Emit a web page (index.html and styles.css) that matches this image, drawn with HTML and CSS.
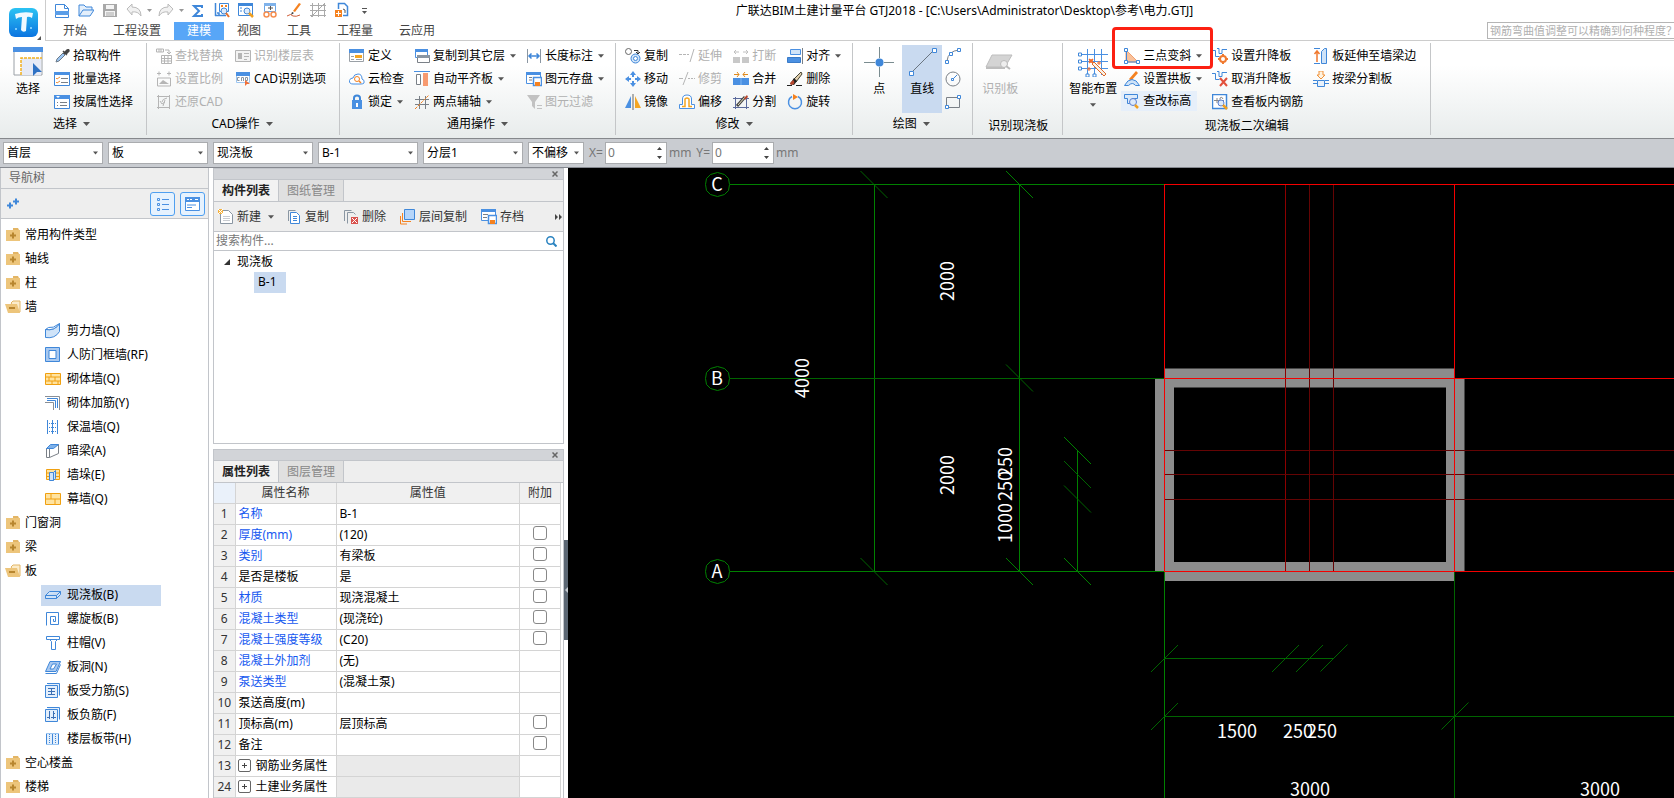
FILE: index.html
```html
<!DOCTYPE html>
<html lang="zh-CN">
<head>
<meta charset="utf-8">
<title>广联达BIM土建计量平台 GTJ2018</title>
<link rel="stylesheet" href="styles.css">
</head>
<body>
<svg class="defs" width="0" height="0" aria-hidden="true">
  <symbol id="down" viewBox="0 0 7 4"><path d="M0 0h7L3.500 4z" fill="#555"/></symbol>
  <symbol id="close" viewBox="0 0 6 6"><path d="M.5.5l5 5M5.500.5l-5 5" stroke="#666" stroke-width="1.500"/></symbol>
  <symbol id="folder" viewBox="0 0 16 16"><path d="M8 1h5l1 2H8z" fill="#e3b565"/><path d="M1 3h14v11H1z" fill="#edc57b"/><path d="M5 8.500h6M8 5.500v6" stroke="#b8862f" stroke-width="2"/></symbol>
  <symbol id="folder-open" viewBox="0 0 16 16"><path d="M6 4l2-2h7v11h-2z" fill="#fbeccb" stroke="#e3b565"/><path d="M0 5h12l3 9H3z" fill="#edc57b"/><path d="M4 9h6" stroke="#b8862f" stroke-width="2"/></symbol>
</svg>

<header class="top">
  <button class="logo" aria-label="应用菜单">
    <svg width="33" height="33" viewBox="0 0 33 33"><defs><linearGradient id="lg" x2="0" y2="1"><stop stop-color="#2bc3f3"/><stop offset="1" stop-color="#0b74e0"/></linearGradient></defs><rect width="29" height="29" rx="6" fill="url(#lg)"/><path d="M6 6q9-3 18-1l-1 5q-3-2-5-1l-1 14q-3 2-5-1l1-13q-4 0-6 2z" fill="#eef9ff"/><circle cx="7" cy="21" r="1" fill="#9fe0ff"/><circle cx="22" cy="20" r="1" fill="#9fe0ff"/><path d="M32 28v4h-4z" fill="#555"/></svg>
  </button>
  <div class="top-main">
    <div class="title-row">
      <div class="quick">
        <button aria-label="新建"><svg viewBox="0 0 16 16"><path d="M1.500 2.500h9l4 4v9h-13zM10.500 2.500v4h4" fill="#fff" stroke="#3f87d9"/><path d="M1 9h14v4H1z" fill="#5b9ee8"/></svg></button>
        <button aria-label="打开"><svg viewBox="0 0 16 16"><path d="M1 14V3h5l2 2h6v3M1 14l4-6h11l-4 6z" fill="#e4effb" stroke="#3f87d9"/></svg></button>
        <button aria-label="保存"><svg viewBox="0 0 16 16"><path d="M1 2h14v13H1z" fill="#a8a8a8"/><path d="M4 3h8v4H4zM3 9h10v5H3z" fill="#f4f4f4"/><path d="M4 11h8M4 13h8" stroke="#a8a8a8"/></svg></button>
        <button class="with-arrow" aria-label="撤销"><svg viewBox="0 0 16 16"><path d="M1 7l5-5v3q9 0 9 9q-3-5-9-4v3z" fill="#f1f1f1" stroke="#bbb"/></svg><svg class="arrow pale"><use href="#down"/></svg></button>
        <button class="with-arrow" aria-label="重做"><svg viewBox="0 0 16 16"><path d="M15 7l-5-5v3Q1 5 1 14q3-5 9-4v3z" fill="#f1f1f1" stroke="#bbb"/></svg><svg class="arrow pale"><use href="#down"/></svg></button>
        <button aria-label="汇总计算"><svg viewBox="0 0 16 16"><path d="M12 6V4H4l5 5-5 5h8v-2" fill="none" stroke="#3f87d9" stroke-width="2"/></svg></button>
        <button aria-label="查看"><svg viewBox="0 0 16 16"><path d="M1.500 1v13M1 13.500h11M3 11h2v2" fill="none" stroke="#3f87d9" stroke-width="1.500"/><path d="M5.500 1.500h9v8h-9z" fill="#fff" stroke="#3f87d9"/><path d="M7 3h2v2H7zM11 3h2v2h-2z" fill="#f58220"/><circle cx="10" cy="9" r="3" fill="#dceafa" stroke="#3f87d9"/><path d="M12 11l3 4" stroke="#e8702a" stroke-width="2"/></svg></button>
        <button aria-label="查找"><svg viewBox="0 0 16 16"><path d="M.5 1.500h14v12H.5z" fill="#fff" stroke="#3f87d9"/><path d="M0 1h15v3H0z" fill="#3f87d9"/><path d="M2 6h2M2 9h2" stroke="#3f87d9"/><circle cx="9" cy="9" r="3" fill="#dceafa" stroke="#3f87d9"/><path d="M11 11l4 4" stroke="#f0a020" stroke-width="2.500"/></svg></button>
        <button aria-label="检查"><svg viewBox="0 0 16 16"><path d="M2.500 1.500h11v8h-11z" fill="#fff" stroke="#6aa5e5"/><path d="M2 1h12v3H2z" fill="#7fb2ea"/><path d="M6 6h5M8.500 4v4" stroke="#555"/><circle cx="4.500" cy="12.500" r="2.500" fill="none" stroke="#f58e50" stroke-width="1.500"/><circle cx="11.500" cy="12.500" r="2.500" fill="none" stroke="#f58e50" stroke-width="1.500"/></svg></button>
        <button aria-label="画笔"><svg viewBox="0 0 16 16"><path d="M13 1l2 1-6 8-2-1z" fill="#f58220"/><path d="M6 10l2 1-3 2z" fill="#333"/><path d="M1 14q4-3 6 0q3 1 7-1" stroke="#d0603a" fill="none"/></svg></button>
        <button aria-label="轴网"><svg viewBox="0 0 16 16"><path d="M2.500 1v14M8.500 1v14M14.500 1v14M0 3.500h16M0 8.500h16M0 13.500h16M1 15L15 1" stroke="#aaa" fill="none"/></svg></button>
        <button aria-label="导入"><svg viewBox="0 0 16 16"><path d="M4.500 7V1.500h6l3 3v9H9" fill="#fff" stroke="#3f87d9" stroke-width="1.500"/><path d="M1 8h7v7H1z" fill="#f58220"/><path d="M2 11.500h5M4.500 9v5" stroke="#fff"/><path d="M9 7q3 0 2 4" stroke="#555" fill="none"/></svg></button>
        <button aria-label="自定义"><svg viewBox="0 0 16 16"><path d="M4 6.500h5" stroke="#555"/><path d="M4 9h5L6.500 12z" fill="#555"/></svg></button>
      </div>
      <h1>广联达BIM土建计量平台 GTJ2018 - [C:\Users\Administrator\Desktop\参考\电力.GTJ]</h1>
    </div>
    <div class="menu-row">
      <nav class="menu">
        <button>开始</button><button>工程设置</button><button class="active">建模</button><button>视图</button><button>工具</button><button>工程量</button><button>云应用</button>
      </nav>
      <input class="help" aria-label="帮助搜索" placeholder="钢筋弯曲值调整可以精确到何种程度？">
    </div>
  </div>
</header>

<section class="ribbon">
  <div class="group first">
    <div class="tools">
      <button class="big"><svg viewBox="0 0 30 30"><path d="M1 1h28v27H1z" fill="#fff" stroke="#9aa0a6"/><path d="M0 0h30v5H0z" fill="#4a90e2"/><path d="M8 11h20v17H8z" fill="#e6eaf6"/><path d="M8 28V11h21" fill="none" stroke="#f2b01e" stroke-width="1.500" stroke-dasharray="3 1"/><path d="M20 16l9 9h-5l-4 4z" fill="#2f72c4"/></svg>选择</button>
      <div class="col">
        <button class="tool"><svg viewBox="0 0 16 16"><path d="M2 14l1-3 6-6 2 2-6 6z" fill="#9cc6f2" stroke="#6c7a89"/><path d="M9 3l4 4M10 5l3-3q2-1 2 1l-3 3z" fill="#444" stroke="#444" stroke-width="1.500"/></svg>拾取构件</button>
        <button class="tool"><svg viewBox="0 0 16 16"><path d="M.5 1.500h15v13H.5z" fill="#fff" stroke="#3f87d9"/><path d="M0 1h16v3H0z" fill="#4a90e2"/><path d="M2 7l1 1 3-2M2 11l1 1 3-2" fill="none" stroke="#f0923a"/><path d="M7 7.500h7M7 11.500h7" stroke="#7a8087"/></svg>批量选择</button>
        <button class="tool"><svg viewBox="0 0 16 16"><path d="M.5 1.500h15v13H.5z" fill="#fff" stroke="#3f87d9"/><path d="M0 1h16v4H0z" fill="#4a90e2"/><path d="M2 2h4L4 4z" fill="#fff"/><path d="M3 8.500h1M6 8.500h7M3 11.500h1M6 11.500h7" stroke="#7a8087"/></svg>按属性选择</button>
      </div>
    </div>
    <button class="group-name">选择<svg class="arrow"><use href="#down"/></svg></button>
  </div>

  <div class="group">
    <div class="tools gap-12">
      <div class="col">
        <button class="tool" disabled><svg viewBox="0 0 16 16"><path d="M.5 1v3h7V1zM3 1v3M5 1v3M9 2h4v4M11 4l2 2 2-2M5.500 7.500h10v8h-10zM5 10.500h10M5 13h10M8.500 7v8M12 7v8" fill="none" stroke="#b5b5b5"/></svg>查找替换</button>
        <button class="tool" disabled><svg viewBox="0 0 16 16"><path d="M1 2.500h4M3 .5v4M11 2.500h4M13 .5v4M1.500 7v8h13V7z" fill="none" stroke="#b5b5b5"/><path d="M3 13l4-4 3 2 3 2z" fill="#b5b5b5"/></svg>设置比例</button>
        <button class="tool" disabled><svg viewBox="0 0 16 16"><path d="M1 2.500h13M1 13.500h13M2.500 1v14M13.500 1v14M6 8q0-3 5-4M4 7l2 3 3-2M9 6l-2 6" fill="none" stroke="#b5b5b5"/></svg>还原CAD</button>
      </div>
      <div class="col">
        <button class="tool" disabled><svg viewBox="0 0 16 16"><path d="M.5 2.500h15v11H.5z" fill="#f3f3f3" stroke="#b5b5b5"/><path d="M3 5h4v6H3z" fill="#b5b5b5"/><path d="M9 5.500h5M9 8.500h5M9 11.500h3" stroke="#b5b5b5"/></svg>识别楼层表</button>
        <button class="tool"><svg viewBox="0 0 16 16"><path d="M1.500 1.500h13v10h-13z" fill="#fff" stroke="#9cc6f2"/><path d="M1 1h14v4H1z" fill="#4a90e2"/><path d="M4.500 6.500h-2v3h2M6.500 10V6.500h2V10M10.500 6.500v3h2v-3z" stroke="#8a96a2" fill="none"/><path d="M10 9l5 4h-3l-2 2z" fill="#f0703a"/></svg>CAD识别选项</button>
      </div>
    </div>
    <button class="group-name">CAD操作<svg class="arrow"><use href="#down"/></svg></button>
  </div>

  <div class="group tight">
    <div class="tools gap-10">
      <div class="col">
        <button class="tool"><svg viewBox="0 0 16 16"><path d="M.5 1.500h14v12H.5z" fill="#fff" stroke="#9aa0a6"/><path d="M0 1h15v4H0z" fill="#4a90e2"/><path d="M2 8.500h3M2 11.500h3M7 11.500h6" stroke="#9aa0a6"/><path d="M6 7h7v3H6z" fill="#f5a623"/></svg>定义</button>
        <button class="tool"><svg viewBox="0 0 16 16"><path d="M4 13Q0 13 .5 9.500Q1 7 4 7Q5 3 9 3q4 0 4 5q3 1 2 4-1 1-3 1z" fill="#fff" stroke="#4a90e2"/><circle cx="8" cy="8" r="2.500" fill="none" stroke="#f58220"/><path d="M10 10l2 2" stroke="#f58220" stroke-width="1.500"/></svg>云检查</button>
        <button class="tool"><svg viewBox="0 0 16 16"><path d="M5 7V4q0-2.500 3-2.500T11 4v3" fill="none" stroke="#3f87d9" stroke-width="2"/><path d="M3 6h10v9H3z" fill="#4a90e2"/><path d="M8 9v4" stroke="#fff" stroke-width="2"/></svg>锁定<svg class="arrow"><use href="#down"/></svg></button>
      </div>
      <div class="col">
        <button class="tool"><svg viewBox="0 0 16 16"><path d="M1.500 1.500h12v8h-12z" fill="#fff" stroke="#4a90e2"/><path d="M1 1h13v3H1z" fill="#4a90e2"/><path d="M3.500 7.500h12v7h-12z" fill="#fff" stroke="#7a8087"/><path d="M3 7h13v3H3z" fill="#8a96a2"/></svg>复制到其它层<svg class="arrow"><use href="#down"/></svg></button>
        <button class="tool"><svg viewBox="0 0 16 16"><path d="M0 .5h16" stroke="#4a90e2"/><path d="M2.500 3.500h4v10h-4z" fill="#fff" stroke="#7a8087"/><path d="M9 2h5v13H9z" fill="#f79a70"/></svg>自动平齐板<svg class="arrow"><use href="#down"/></svg></button>
        <button class="tool"><svg viewBox="0 0 16 16"><path d="M5.500 2v13M11.500 2v13M1 5.500h14M1 10.500h14" stroke="#7a8087"/><path d="M1 15L15 1" stroke="#f58220" stroke-dasharray="3 1"/></svg>两点辅轴<svg class="arrow"><use href="#down"/></svg></button>
      </div>
      <div class="col">
        <button class="tool"><svg viewBox="0 0 16 16"><path d="M1.500 1v14M14.500 1v14" stroke="#8a96a2"/><path d="M3 8h10M5.500 5.500L3 8l2.500 2.500M10.500 5.500L13 8l-2.500 2.500" stroke="#3f87d9" fill="none" stroke-width="1.500"/></svg>长度标注<svg class="arrow"><use href="#down"/></svg></button>
        <button class="tool"><svg viewBox="0 0 16 16"><path d="M.5 1.500h14v11H.5z" fill="#fff" stroke="#4a90e2"/><path d="M0 1h15v3H0z" fill="#4a90e2"/><path d="M3 6.500h3M3 9h3" stroke="#7a8087"/><path d="M7.500 6.500h8v8h-8z" fill="#fff" stroke="#4a90e2" stroke-width="1.500"/><path d="M9 11h5v4H9z" fill="#f58220"/></svg>图元存盘<svg class="arrow"><use href="#down"/></svg></button>
        <button class="tool" disabled><svg viewBox="0 0 16 16"><path d="M1 1h13L9 8v7l-3-3V8z" fill="#c2c2c2"/><path d="M11 11.500h5M11 14.500h5" stroke="#c2c2c2"/></svg>图元过滤</button>
      </div>
    </div>
    <button class="group-name">通用操作<svg class="arrow"><use href="#down"/></svg></button>
  </div>

  <div class="group tight">
    <div class="tools gap-11">
      <div class="col">
        <button class="tool"><svg viewBox="0 0 16 16"><circle cx="3.500" cy="3.500" r="3" fill="#fff" stroke="#666"/><circle cx="10.500" cy="10.500" r="4.500" fill="#cfe3f8" stroke="#3f87d9"/><circle cx="10.500" cy="10.500" r="2" fill="#fff" stroke="#3f87d9"/><path d="M9 2.500h4v3M11 4l2 2 2-2" stroke="#333" fill="none"/></svg>复制</button>
        <button class="tool"><svg viewBox="0 0 16 16"><path d="M8 0l3 4H5zM8 16l3-4H5zM0 8l4-3v6zM16 8l-4-3v6z" fill="#4a90e2"/><path d="M8 3v3M8 10v3M3 8h3M10 8h3" stroke="#4a90e2" stroke-width="2"/></svg>移动</button>
        <button class="tool"><svg viewBox="0 0 16 16"><path d="M6 2v12H0z" fill="#4a90e2"/><path d="M10 2v12h6z" fill="#f5a623"/><path d="M8 0v16" stroke="#666"/></svg>镜像</button>
      </div>
      <div class="col">
        <button class="tool" disabled><svg viewBox="0 0 16 16"><path d="M0 6.500h10" stroke="#b5b5b5" stroke-dasharray="3 1"/><path d="M11 14l4-13" stroke="#b5b5b5"/></svg>延伸</button>
        <button class="tool" disabled><svg viewBox="0 0 16 16"><path d="M0 7.500h4M4 14L9 1" stroke="#b5b5b5" fill="none"/><path d="M9 7.500h7" stroke="#b5b5b5" stroke-dasharray="2 1"/></svg>修剪</button>
        <button class="tool"><svg viewBox="0 0 16 16"><path d="M.5 14.500v-4h3V5q0-4 4.500-4t4.500 4v5.500h3v4z" fill="#fff" stroke="#4a90e2"/><path d="M3 12.500h3V5q2-2 4 0v7.500h3" fill="none" stroke="#f5a623" stroke-width="1.500"/></svg>偏移</button>
      </div>
      <div class="col">
        <button class="tool" disabled><svg viewBox="0 0 16 16"><path d="M0 9h7v6H0zM9 9h7v6H9z" fill="#c8c8c8"/><path d="M1 4h5M3 2L1 4l2 2M10 4h5M13 2l2 2-2 2" stroke="#c0c0c0" fill="none"/></svg>打断</button>
        <button class="tool"><svg viewBox="0 0 16 16"><path d="M0 7h16v7H0z" fill="#4a90e2"/><path d="M8 7v7" stroke="#7fb6f2"/><path d="M1 3.500h5M4 1l2 2.500L4 6M15 3.500h-5M12 1l-2 2.500L12 6" stroke="#e08a1c" fill="none"/></svg>合并</button>
        <button class="tool"><svg viewBox="0 0 16 16"><path d="M0 4.500h16M0 13.500h16M2.500 3v12M13.500 3v12" stroke="#5b6a9c"/><path d="M4 12L12 3" stroke="#444" stroke-width="3"/><path d="M5 11l7-8" stroke="#e8e2c0"/><path d="M11 4l3-3 1 2-3 3z" fill="#b5452c"/></svg>分割</button>
      </div>
      <div class="col">
        <button class="tool"><svg viewBox="0 0 16 16"><path d="M3.500 1.500h10v5h-10z" fill="#cfe3f8" stroke="#4a90e2"/><path d="M.5 9.500h13v5H.5z" fill="#4a90e2" stroke="#3a7bc8"/><path d="M15.500 0v16" stroke="#7a8087"/></svg>对齐<svg class="arrow"><use href="#down"/></svg></button>
        <button class="tool"><svg viewBox="0 0 16 16"><path d="M6 9l8-8 1 2-6 8z" fill="#e2cfae" stroke="#443"/><path d="M7 7l3 3-3 4-4-1z" fill="#222"/><path d="M6 9q2 1 1 4l-3 1-1-2z" fill="#b5452c"/><path d="M0 14.500h5M9 14.500h6" stroke="#222"/></svg>删除</button>
        <button class="tool"><svg viewBox="0 0 16 16"><path d="M5 2.500a6.500 6.500 0 1 0 6 0" fill="none" stroke="#4a90e2" stroke-width="1.500"/><path d="M6 0l5 3-5 3z" fill="#f58220"/></svg>旋转</button>
      </div>
    </div>
    <button class="group-name">修改<svg class="arrow"><use href="#down"/></svg></button>
  </div>

  <div class="group draw">
    <div class="tools">
      <button class="big"><svg viewBox="0 0 30 30"><path d="M15.500 0v30M0 15.500h30" stroke="#7a8c90"/><path d="M15.500 11v9M11 15.500h9" stroke="#f4f4f4"/><circle cx="15.500" cy="15.500" r="4" fill="#3f87d9"/></svg>点</button>
      <button class="big on"><svg viewBox="0 0 30 30"><path d="M4 26L26 4" stroke="#6a7580"/><path d="M2.500 24.500h4v4h-4zM25.500 1.500h4v4h-4z" fill="#fff" stroke="#3f87d9"/></svg>直线</button>
      <div class="col">
        <button class="tool" aria-label="弧"><svg viewBox="0 0 16 16"><path d="M2 13Q3 3 14 2" fill="none" stroke="#7a8087"/><path d="M.5 12.500h3v3h-3zM4.500 4.500h3v3h-3zM12.500.5h3v3h-3z" fill="#fff" stroke="#3f87d9"/></svg></button>
        <button class="tool" aria-label="圆"><svg viewBox="0 0 16 16"><circle cx="8" cy="8" r="7" fill="none" stroke="#7a8087"/><path d="M8 8l4-4" stroke="#3f87d9"/><path d="M6.500 7.500h2v2h-2z" fill="#fff" stroke="#3f87d9"/></svg></button>
        <button class="tool" aria-label="矩形"><svg viewBox="0 0 16 16"><path d="M1.500 3.500h13v10h-13z" fill="none" stroke="#7a8087"/><path d="M.5 11.500h3v3h-3zM12.500 1.500h3v3h-3z" fill="#fff" stroke="#3f87d9"/></svg></button>
      </div>
    </div>
    <button class="group-name">绘图<svg class="arrow"><use href="#down"/></svg></button>
  </div>

  <div class="group slab">
    <div class="tools">
      <button class="big fit" disabled><svg viewBox="0 0 30 30"><path d="M7 8h20l-7 12H1z" fill="#d4d4d4" stroke="#bdbdbd"/><path d="M1 20h19v2H1z" fill="#bdbdbd"/><circle cx="19" cy="17" r="3.500" fill="#eee" stroke="#bbb"/><path d="M21 19l4 3" stroke="#bbb" stroke-width="2"/></svg>识别板</button>
    </div>
    <div class="group-name low">识别现浇板</div>
  </div>

  <div class="group edit">
    <div class="tools">
      <button class="big fit"><svg viewBox="0 0 30 30"><path d="M9.500 2v26M16.500 2v26M23.500 2v26M2 7.500h28M2 14.500h28M2 21.500h28" stroke="#4a90e2"/><path d="M.5 6h3v3h-3zM.5 13h3v3h-3zM.5 20h3v3h-3zM8 27h3v3H8zM15 27h3v3h-3z" fill="#fff" stroke="#3f87d9"/><path d="M14 17l2-2 12 12-2 2z" fill="#f7f1e6" stroke="#e06a2a"/><path d="M11 12l2 1 2-1-1 2 1 2-2-1-2 1 1-2zM19 16h4M21 14v4M9 22h4M11 20v4" stroke="#f26a2a" fill="#f26a2a"/></svg>智能布置<svg class="arrow below"><use href="#down"/></svg></button>
      <div class="col">
        <button class="tool marked"><svg viewBox="0 0 16 16"><path d="M2 2v12h12z" fill="#f9c19b" stroke="#f0a070"/><path d="M2.500 3v11H14" stroke="#3f87d9" fill="none"/><path d="M.5.5h3v3h-3zM.5 12.500h3v3h-3zM12.500 12.500h3v3h-3z" fill="#fff" stroke="#3f87d9"/></svg>三点变斜<svg class="arrow"><use href="#down"/></svg></button>
        <button class="tool"><svg viewBox="0 0 16 16"><path d="M12 0l2 2-7 8-2-2z" fill="#f58220"/><path d="M.5 14.500q3-6 7.500-6t7.500 6h-4q-3-4-7 0z" fill="#cfe3f8" stroke="#3f87d9"/></svg>设置拱板<svg class="arrow"><use href="#down"/></svg></button>
        <button class="tool hover"><svg viewBox="0 0 16 16"><path d="M.5 1.500h13v4H8v5H3.500v-5h-3z" fill="#dceafa" stroke="#3f87d9"/><circle cx="9" cy="9" r="3.500" fill="#dceafa" stroke="#5b7fd0"/><path d="M11 12l3 3" stroke="#f0a020" stroke-width="2.500"/></svg>查改标高</button>
      </div>
      <div class="col">
        <button class="tool"><svg viewBox="0 0 16 16"><path d="M0 2.500h3.500v6h4M5 .5h2v5h3v-4h5" fill="none" stroke="#3f87d9"/><circle cx="11" cy="11" r="3" fill="#fff" stroke="#f07a30" stroke-width="2"/><path d="M11 6v2M11 14v2M6 11h2M14 11h2" stroke="#f07a30" stroke-width="2"/></svg>设置升降板</button>
        <button class="tool"><svg viewBox="0 0 16 16"><path d="M0 2.500h3.500v6h4M5 .5h2v5h3v-4h5" fill="none" stroke="#3f87d9"/><path d="M8 7l7 8M15 7l-7 8" stroke="#e2503c" stroke-width="2"/></svg>取消升降板</button>
        <button class="tool"><svg viewBox="0 0 16 16"><path d="M.5.5h14v14H.5z" fill="#fff" stroke="#3f87d9" stroke-width="1.500"/><path d="M2 6.500h10M5 4v5M8 9V4q2-2 3 1" stroke="#888" fill="none"/><circle cx="9" cy="9" r="3" fill="#dceafa" stroke="#5b7fd0"/><path d="M11 11l4 4" stroke="#f0a020" stroke-width="2.500"/></svg>查看板内钢筋</button>
      </div>
      <div class="col">
        <button class="tool"><svg viewBox="0 0 16 16"><path d="M1 .5h6M1 15.500h6" stroke="#3f87d9"/><path d="M4 14V3M1.500 6L4 3l2.500 3" stroke="#f07a30" fill="none" stroke-width="1.500"/><path d="M8.500 15.500v-12l3-3h2v15z" fill="#cfe3f8" stroke="#3f87d9"/></svg>板延伸至墙梁边</button>
        <button class="tool"><svg viewBox="0 0 16 16"><path d="M6 0h4v4h2L8 8 4 4h2z" fill="#fff3e0" stroke="#f0923a"/><path d="M4.500 9.500h7v6h-7zM0 9.500h4M0 12.500h4M12 9.500h4M12 12.500h4" fill="#e8f1fb" stroke="#3f87d9"/></svg>按梁分割板</button>
      </div>
    </div>
    <div class="group-name low">现浇板二次编辑</div>
  </div>
</section>

<form class="selectors">
  <label class="pick"><select aria-label="楼层"><option>首层</option></select><svg class="arrow"><use href="#down"/></svg></label>
  <label class="pick"><select aria-label="构件大类"><option>板</option></select><svg class="arrow"><use href="#down"/></svg></label>
  <label class="pick"><select aria-label="构件类型"><option>现浇板</option></select><svg class="arrow"><use href="#down"/></svg></label>
  <label class="pick"><select aria-label="构件"><option>B-1</option></select><svg class="arrow"><use href="#down"/></svg></label>
  <label class="pick"><select aria-label="分层"><option>分层1</option></select><svg class="arrow"><use href="#down"/></svg></label>
  <label class="pick small"><select aria-label="偏移方式"><option>不偏移</option></select><svg class="arrow"><use href="#down"/></svg></label>
  <label class="offset">X=<span class="spin"><input value="0"><svg width="5" height="12" viewBox="0 0 5 12"><path d="M0 3h5L2.500 0zM0 9h5L2.500 12z" fill="#444"/></svg></span>mm</label>
  <label class="offset">Y=<span class="spin"><input value="0"><svg width="5" height="12" viewBox="0 0 5 12"><path d="M0 3h5L2.500 0zM0 9h5L2.500 12z" fill="#444"/></svg></span>mm</label>
</form>

<main class="work">
  <aside class="nav">
    <h2>导航树</h2>
    <div class="nav-tools">
      <button class="plus" aria-label="展开"><svg width="12" height="12" viewBox="0 0 12 12"><path d="M0 7.500h6M3 4.500v6M6 3.500h6M9 .5v6" stroke="#3f87d9" stroke-width="2"/></svg></button>
      <button class="view" aria-label="列表视图"><svg width="14" height="14" viewBox="0 0 14 14"><path d="M1.500 1.500h2v2h-2zM1.500 6.500h2v2h-2zM1.500 11.500h2v2h-2zM6 2.500h7M6 7.500h7M6 12.500h7" fill="none" stroke="#4a90e2"/></svg></button>
      <button class="view" aria-label="窗口视图"><svg width="15" height="14" viewBox="0 0 15 14"><path d="M.5.5h14v13H.5z" fill="#fff" stroke="#4a90e2"/><path d="M0 0h15v5H0z" fill="#4a90e2"/><path d="M2 2.500h2M5 2.500h2M10 2.500h3" stroke="#fff"/><path d="M2 8h9M2 10.500h5" stroke="#4a90e2"/></svg></button>
    </div>
    <ul class="tree">
      <li><svg><use href="#folder"/></svg>常用构件类型</li>
      <li><svg><use href="#folder"/></svg>轴线</li>
      <li><svg><use href="#folder"/></svg>柱</li>
      <li><svg><use href="#folder-open"/></svg>墙</li>
      <li class="child"><span><svg viewBox="0 0 16 16"><path d="M.5 6.500Q10 8 14.500.5v8Q10 16 .5 14.500z" fill="#cfe3f8" stroke="#3f87d9"/><path d="M.5 6.500l3-2Q9 5 12 2l2.500-1.500Q10 8 .5 6.500z" fill="#fff" stroke="#3f87d9"/></svg>剪力墙(Q)</span></li>
      <li class="child"><span><svg viewBox="0 0 16 16"><path d="M.5.5h14v14H.5z" fill="#a9c9f0" stroke="#3f87d9"/><path d="M4 3.500h7v8H4z" fill="#fff" stroke="#3f87d9"/></svg>人防门框墙(RF)</span></li>
      <li class="child"><span><svg viewBox="0 0 16 16"><path d="M.5 2.500h15v11H.5zM.5 6h15M.5 10h15M6 2.500V6M10 6v4M4 6v4M7 10v3.500M13 10v3.500" fill="#ffe3a0" stroke="#f0a010"/></svg>砌体墙(Q)</span></li>
      <li class="child"><span><svg viewBox="0 0 16 16"><path d="M0 1.500h14.500V15M0 7.500h8.500V15" fill="none" stroke="#8a8f96"/><path d="M2 3.500h10.500V13M2 5.500h8.500V13" fill="none" stroke="#3f87d9"/></svg>砌体加筋(Y)</span></li>
      <li class="child"><span><svg viewBox="0 0 16 16"><path d="M2.500 1v14M7.500 1v14M12.500 1v14" stroke="#3f87d9"/><path d="M4 4.500h7M4 8.500h7M4 12.500h7" stroke="#3f87d9" stroke-dasharray="1 1"/></svg>保温墙(Q)</span></li>
      <li class="child"><span><svg viewBox="0 0 16 16"><path d="M4.500 14.500h-3v-9h3zM4.500 14.500l9-4v-9l-9 4" fill="#fff" stroke="#7a8087"/><path d="M1.500 5.500l4-4h8l-5 4z" fill="#7fb2ea" stroke="#3f87d9"/></svg>暗梁(A)</span></li>
      <li class="child"><span><svg viewBox="0 0 16 16"><path d="M1.500 2.500h13v10h-13zM1.500 6h13M1.500 9.500h13" fill="#ffe3a0" stroke="#f0a010"/><path d="M4.500 5.500h4v8h-4zM8.500 5.500l2-2v8l-2 2" fill="#cfe3f8" stroke="#3f87d9"/></svg>墙垛(E)</span></li>
      <li class="child"><span><svg viewBox="0 0 16 16"><path d="M.5 2.500h15v11H.5zM.5 8h15M6 2.500V8M10 8v5.500" fill="#ffe3a0" stroke="#f0a010"/></svg>幕墙(Q)</span></li>
      <li><svg><use href="#folder"/></svg>门窗洞</li>
      <li><svg><use href="#folder"/></svg>梁</li>
      <li><svg><use href="#folder-open"/></svg>板</li>
      <li class="child selected"><span><svg viewBox="0 0 16 16"><path d="M.5 8.500l4-4h11v3l-4 4H.5zM.5 8.500h11l4-4M11.500 8.500v3" fill="#cfe3f8" stroke="#3f87d9"/></svg>现浇板(B)</span></li>
      <li class="child"><span><svg viewBox="0 0 16 16"><path d="M1.500 14.500v-13h12v12h-8v-8h5v5h-2V8" fill="none" stroke="#3f87d9"/></svg>螺旋板(B)</span></li>
      <li class="child"><span><svg viewBox="0 0 16 16"><path d="M1.500 1.500h13v3h-2l-2 2v8h-4v-8l-2-2h-3zM4.500 4.500h8" fill="#fff" stroke="#3f87d9"/></svg>柱帽(V)</span></li>
      <li class="child"><span><svg viewBox="0 0 16 16"><path d="M5 2.500h10.500L11 12.500H.5z" fill="#a9c9f0" stroke="#3f87d9"/><path d="M7.500 5h4l-3 5H5z" fill="#fff" stroke="#3f87d9"/><path d="M.5 14.500h11l4-9" fill="none" stroke="#3f87d9"/></svg>板洞(N)</span></li>
      <li class="child"><span><svg viewBox="0 0 16 16"><path d="M.5 2.500h12v12H.5zM2 .5h12.500v12" fill="#e4effb" stroke="#3f87d9"/><path d="M3 5.500h7M3 8.500h7M3 11.500h7M6.500 5v7" stroke="#3a6fb5"/></svg>板受力筋(S)</span></li>
      <li class="child"><span><svg viewBox="0 0 16 16"><path d="M.5 2.500h12v12H.5zM2 .5h12.500v12" fill="#e4effb" stroke="#3f87d9"/><path d="M4.500 4v8M8.500 4v8M2 10.500h3M6 10.500h5M8 6.500h2" stroke="#3a6fb5"/></svg>板负筋(F)</span></li>
      <li class="child"><span><svg viewBox="0 0 16 16"><path d="M1 2.500h13M1 13.500h13" stroke="#9cc6f2"/><path d="M1 3h13v10H1z" fill="#e4effb"/><path d="M1.500 3v10M7.500 3v10M13.500 3v10" stroke="#3f87d9"/><path d="M4.500 3v10M10.500 3v10" stroke="#3f87d9" stroke-dasharray="1 1"/></svg>楼层板带(H)</span></li>
      <li><svg><use href="#folder"/></svg>空心楼盖</li>
      <li><svg><use href="#folder"/></svg>楼梯</li>
    </ul>
  </aside>

  <div class="panels">
    <section class="panel list">
      <div class="strip"><button aria-label="关闭"><svg width="6" height="6"><use href="#close"/></svg></button></div>
      <div class="tabs"><button class="active">构件列表</button><button>图纸管理</button></div>
      <div class="bar">
        <button><svg viewBox="0 0 16 16"><path d="M2.500 1.500h8l4 4v9h-12z" fill="#fff" stroke="#8a96a2"/><path d="M5 7.500h7M5 9.500h7M5 11.500h7" stroke="#c9ccd1"/><path d="M0 0h5v5H0z" fill="#f5b342"/><path d="M0 0l5 5M5 0L0 5" stroke="#fff"/></svg>新建<svg class="arrow"><use href="#down"/></svg></button>
        <button><svg viewBox="0 0 16 16"><path d="M2.500 12V1.500h7" fill="none" stroke="#8a96a2"/><path d="M4.500 3.500h6l3 3v8h-9zM7 7.500h4M7 9.500h4M7 11.500h4" fill="#fff" stroke="#3f87d9"/></svg>复制</button>
        <button><svg viewBox="0 0 16 16"><path d="M1.500 12V1.500h7M4.500 14.500v-11h6l2 2" fill="none" stroke="#8a96a2"/><path d="M8 8h7v7H8z" fill="#d9534f"/><path d="M9 9l5 5M14 9l-5 5" stroke="#fff"/></svg>删除</button>
        <button><svg viewBox="0 0 16 16"><path d="M4.500.5h10v10h-10z" fill="#b5d5fa" stroke="#3f87d9"/><path d="M2.500 4v8.500H11M.5 7v8H7" fill="none" stroke="#f58220"/></svg>层间复制</button>
        <button><svg viewBox="0 0 16 16"><path d="M.5.5h14v11H.5z" fill="#fff" stroke="#4a90e2"/><path d="M0 0h15v3H0z" fill="#4a90e2"/><path d="M2 5.500h5M2 8.500h4" stroke="#7a8087"/><path d="M7.500 6.500h8v8h-8z" fill="#fff" stroke="#4a90e2" stroke-width="1.500"/><path d="M9 11h5v4H9z" fill="#f58220"/></svg>存档</button>
        <button class="more" aria-label="更多"><svg class="mini" viewBox="0 0 8 6"><path d="M0 0l3 3-3 3zM4 0l3 3-3 3z" fill="#444"/></svg></button>
      </div>
      <div class="search"><input aria-label="搜索构件" placeholder="搜索构件..."><svg width="11" height="11" viewBox="0 0 11 11"><circle cx="4.500" cy="4.500" r="3.700" fill="none" stroke="#2a83c0" stroke-width="1.500"/><path d="M7 7l3.500 3.500" stroke="#2a83c0" stroke-width="2"/></svg></div>
      <ul class="items">
        <li><svg width="6" height="6" viewBox="0 0 6 6"><path d="M6 0v6H0z" fill="#333"/></svg>现浇板</li>
        <li class="leaf"><span>B-1</span></li>
      </ul>
    </section>

    <section class="panel props">
      <div class="strip"><button aria-label="关闭"><svg width="6" height="6"><use href="#close"/></svg></button></div>
      <div class="tabs"><button class="active">属性列表</button><button>图层管理</button></div>
      <table>
        <colgroup><col class="c-no"><col class="c-name"><col><col class="c-add"></colgroup>
        <thead><tr><th></th><th>属性名称</th><th>属性值</th><th>附加</th></tr></thead>
        <tbody>
          <tr><th>1</th><td class="key">名称</td><td>B-1</td><td></td></tr>
          <tr><th>2</th><td class="key">厚度(mm)</td><td>(120)</td><td><input type="checkbox" aria-label="厚度附加"></td></tr>
          <tr><th>3</th><td class="key">类别</td><td>有梁板</td><td><input type="checkbox" aria-label="类别附加"></td></tr>
          <tr><th>4</th><td>是否是楼板</td><td>是</td><td><input type="checkbox" aria-label="是否是楼板附加"></td></tr>
          <tr><th>5</th><td class="key">材质</td><td>现浇混凝土</td><td><input type="checkbox" aria-label="材质附加"></td></tr>
          <tr><th>6</th><td class="key">混凝土类型</td><td>(现浇砼)</td><td><input type="checkbox" aria-label="混凝土类型附加"></td></tr>
          <tr><th>7</th><td class="key">混凝土强度等级</td><td>(C20)</td><td><input type="checkbox" aria-label="混凝土强度等级附加"></td></tr>
          <tr><th>8</th><td class="key">混凝土外加剂</td><td>(无)</td><td></td></tr>
          <tr><th>9</th><td class="key">泵送类型</td><td>(混凝土泵)</td><td></td></tr>
          <tr><th>10</th><td>泵送高度(m)</td><td></td><td></td></tr>
          <tr><th>11</th><td>顶标高(m)</td><td>层顶标高</td><td><input type="checkbox" aria-label="顶标高附加"></td></tr>
          <tr><th>12</th><td>备注</td><td></td><td><input type="checkbox" aria-label="备注附加"></td></tr>
          <tr><th>13</th><td class="parent"><button class="expand" aria-label="展开"></button>钢筋业务属性</td><td class="shade"></td><td></td></tr>
          <tr><th>24</th><td class="parent"><button class="expand" aria-label="展开"></button>土建业务属性</td><td class="shade"></td><td></td></tr>
          <tr><th></th><td></td><td class="shade"></td><td></td></tr>
        </tbody>
      </table>
    </section>
  </div>

  <div class="splitter"><button aria-label="收起面板"><svg width="3" height="6" viewBox="0 0 3 6"><path d="M3 0v6L0 3z" fill="#c5cad0"/></svg></button></div>

  <svg class="canvas" role="img" aria-label="轴网平面图">
    <defs>
      <path id="slash" d="M-13.500-13.500l27 27"/>
      <path id="back" d="M-13.500 13.500l27-27"/>
      <path id="bubble" d="M0-12L7-10 11-6 12 0 11 6 7 10 0 12-7 10-11 6-12 0-11-6-7-10z"/>
    </defs>
    <g class="walls">
      <path d="M596 200.500h290.500v19H596zM596 394h290.500v19H596zM587 210h19v193h-19zM878 210h18.500v193H878z"/>
    </g>
    <g class="axes">
      <path d="M162 16.500h434M162 403.500h434M306.500 16v387M451.500 16v387M509.500 282v121M596.500 404v226"/>
      <path class="dim" d="M162 210.500h434M596 490.500h169M596 548.500h1200M886.500 404v226"/>
      <use href="#slash" x="306" y="16.500" class="dim"/><use href="#slash" x="451.500" y="16.500"/><use href="#slash" x="451.500" y="210" class="dim"/>
      <use href="#slash" x="306" y="403.500" class="dim"/><use href="#slash" x="451.500" y="403.500"/><use href="#slash" x="509.500" y="403.500"/>
      <use href="#slash" x="509.500" y="282.500"/><use href="#slash" x="509.500" y="306.500" class="dim"/><use href="#slash" x="509.500" y="331" class="dim"/>
      <use href="#back" x="596.500" y="490.500" class="dim"/><use href="#back" x="717.500" y="490.500" class="dim"/><use href="#back" x="741.500" y="490.500" class="dim"/><use href="#back" x="766" y="490" class="dim"/>
      <use href="#back" x="596.500" y="548.500" class="dim"/><use href="#back" x="887" y="548" class="dim"/>
      <use href="#bubble" x="149.500" y="16.500"/><use href="#bubble" x="149.500" y="210.500"/><use href="#bubble" x="149.500" y="403.500"/>
    </g>
    <g class="grid-dark">
      <path d="M717.500 16v387" class="mid"/><path d="M741.500 16v387M765.500 16v387M596 282.500h1200M596 306.500h1200M596 331.500h1200"/>
    </g>
    <g class="grid-red"><path d="M596 16.500h1200M596 210.500h1200M596 403.500h1200M596.500 16v387M886.500 16v387"/></g>
    <g class="marks">
      <text x="149" y="23">C</text><text x="149" y="217">B</text><text x="149" y="410">A</text>
      <text transform="translate(241 210) rotate(-90)">4000</text>
      <text transform="translate(386 113) rotate(-90)">2000</text>
      <text transform="translate(386 307) rotate(-90)">2000</text>
      <text transform="translate(444 294) rotate(-90)">250</text>
      <text transform="translate(444 318) rotate(-90)">250</text>
      <text transform="translate(444 355) rotate(-90)">1000</text>
      <text x="669" y="570">1500</text><text x="730" y="570">250</text><text x="754" y="570">250</text>
      <text x="742" y="628">3000</text><text x="1032" y="628">3000</text>
    </g>
  </svg>
</main>
</body>
</html>
```
FILE: styles.css
```css
* { box-sizing: border-box; }

body {
  margin: 0;
  height: 100vh;
  display: flex;
  flex-direction: column;
  overflow: hidden;
  background: #fff;
  color: #000;
  font: 12px/16px "Noto Sans", "Noto Sans CJK SC", sans-serif;
}

button, input, select {
  font: inherit;
  color: inherit;
  border: 0;
  padding: 0;
  margin: 0;
  background: none;
  border-radius: 0;
  white-space: nowrap;
}

h1, h2, ul { margin: 0; padding: 0; font: inherit; list-style: none; }
svg { flex: none; }
.defs { position: absolute; }
.arrow { width: 6px; height: 4px; margin-left: 5px; }

/* title and menu */
.top { display: flex; flex: none; }
.logo { width: 46px; padding: 8px 0 0 9px; border-right: 1px solid #ccc; display: flex; }
.top-main { flex: 1; min-width: 0; }
.title-row { display: flex; height: 22px; }
.quick { display: flex; gap: 8px; padding: 2px 0 0 8px; align-items: flex-start; }
.quick button { display: flex; align-items: center; }
.quick svg { width: 16px; height: 16px; }
.quick svg.arrow { width: 5px; height: 3px; margin: 0 -2px 0 5px; }
.pale { opacity: .6; }
h1 { flex: 1; padding: 3px 119px 0 0; text-align: center; white-space: nowrap; }
.menu-row { display: flex; justify-content: space-between; height: 19px; border-bottom: 1px solid #ccc; }
.menu { display: flex; padding-left: 4px; }
.menu button { padding: 0 13px; color: #444; line-height: 18px; }
.menu .active { background: #58a6f7; color: #fff; }
.help { width: 187px; height: 17px; border: 1px solid #b5b5b5; border-right: 0; padding-left: 2px; font-size: 11px; }
.help::placeholder { color: #b0b0b0; opacity: 1; }

/* ribbon */
.ribbon {
  display: flex;
  flex: none;
  height: 98px;
  border-bottom: 1px solid #85888c;
  background: linear-gradient(#fff 25%, #e8ecec);
}
.group {
  display: flex;
  flex-direction: column;
  margin: 2px 0 3px;
  padding: 1px 13px 0 9px;
  border-right: 1px solid #c4c6c8;
}
.group.first { padding-left: 8px; }
.group.tight { padding-right: 11px; }
.group.draw { padding: 1px 11px 0 6px; }
.group.slab { padding-right: 8px; width: 90px; }
.group.edit { padding: 1px 14px 0 6px; }
.tools { display: flex; gap: 5px; height: 70px; }
.first .tools { gap: 6px; }
.gap-10 { gap: 10px; }
.gap-11 { gap: 11px; }
.gap-12 { gap: 12px; }
.draw .tools { gap: 3px; }
.edit .tools { gap: 10px; }
.edit .big { margin-right: -3px; }
.col { display: flex; flex-direction: column; align-items: flex-start; }
.tool { display: flex; align-items: center; height: 23px; gap: 3px; }
.tool svg { width: 16px; height: 16px; }
.tool svg.arrow { width: 6px; height: 4px; margin-left: 2px; }
.tool:disabled, .big:disabled { color: #b0b0b0; }
.tool.hover { background: #e6effa; box-shadow: -3px 0 #e6effa, 6px 0 #e6effa; height: 20px; margin-top: 1px; }
.tool.marked { position: relative; }
.tool.marked::after {
  content: "";
  position: absolute;
  inset: -17px -11px -2px -12px;
  border: 3px solid #fc2012;
  border-radius: 4px;
}
.big { width: 40px; display: flex; flex-direction: column; align-items: center; margin-top: 1px; padding-top: 2px; height: 68px; }
.big svg { width: 30px; height: 30px; margin-bottom: 4px; }
.big svg.arrow { width: 6px; height: 4px; margin: 6px 0 0; }
.big.fit { width: auto; }
.big.on { background: #c9daf0; }
.group-name { display: flex; justify-content: center; align-items: center; height: 22px; padding-left: 2px; }
.group-name.low { padding: 4px 0 0; }
.edit .low { padding-left: 8px; }
.group-name .arrow { width: 7px; margin-left: 6px; }

/* selector bar */
.selectors {
  display: flex;
  flex: none;
  height: 29px;
  align-items: center;
  gap: 5px;
  padding-left: 3px;
  background: #c9ccd1;
  border-bottom: 1px solid #85888f;
}
.pick { display: flex; align-items: center; width: 100px; height: 22px; background: #fff; border: 1px solid #aaacaf; padding-right: 4px; }
.pick select { appearance: none; flex: 1; min-width: 0; padding-left: 3px; outline: 0; }
.pick .arrow { width: 5px; margin: 0; }
.pick.small { width: 56px; }
.offset { display: flex; align-items: center; color: #777; gap: 2px; }
.spin { display: flex; align-items: center; width: 62px; height: 22px; background: #fff; border: 1px solid #aaacaf; padding: 0 4px 0 2px; }
.spin input { flex: 1; min-width: 0; }

/* work area */
.work { display: flex; flex: 1; min-height: 0; }
.nav { width: 209px; flex: none; border: 1px solid #c2c5ca; border-width: 0 1px; overflow: hidden; }
.nav h2 { height: 21px; padding: 2px 8px; color: #666; background: #eee; border-bottom: 1px solid #c2c5ca; }
.nav-tools { display: flex; align-items: center; gap: 5px; height: 30px; padding: 0 3px 0 6px; background: #eee; border-bottom: 1px solid #c2c5ca; }
.plus { margin-right: auto; display: flex; }
.view { width: 25px; height: 24px; border: 1px solid #4f9ff0; border-radius: 3px; background: #e6f2fe; display: flex; align-items: center; justify-content: center; }
.tree { padding-top: 4px; }
.tree li { display: flex; align-items: center; height: 24px; padding-left: 4px; gap: 4px; }
.tree svg { width: 16px; height: 16px; }
.tree .child { padding-left: 40px; }
.child span { display: flex; align-items: center; gap: 6px; width: 120px; height: 21px; padding-left: 4px; white-space: nowrap; }
.selected span { background: #c9daf0; }

.panels { width: 351px; flex: none; margin-left: 4px; display: flex; flex-direction: column; gap: 5px; }
.panel { border: 1px solid #c2c5ca; }
.panel.list { height: 276px; flex: none; }
.panel.props { flex: 1; min-height: 0; overflow: hidden; border-bottom: 0; }
.strip { display: flex; justify-content: flex-end; height: 11px; background: #d2d4d8; border-bottom: 1px solid #c2c5ca; padding-right: 5px; }
.strip button { display: flex; align-items: center; }
.tabs { display: flex; height: 22px; background: #eee; border-bottom: 1px solid #c2c5ca; }
.tabs button { padding: 0 8px; color: #888; background: #e0e0e0; border-right: 1px solid #c2c5ca; }
.tabs .active { color: #222; font-weight: 700; background: #f2f2f2; }
.bar { display: flex; align-items: center; gap: 14px; height: 30px; padding: 0 0 0 4px; background: #eee; border-bottom: 1px solid #c2c5ca; color: #333; }
.bar button { display: flex; align-items: center; gap: 3px; }
.bar svg { width: 16px; height: 16px; }
.bar svg.arrow { width: 6px; height: 4px; margin: 0 -2px 0 4px; }
.bar svg.mini { width: 8px; height: 6px; }
.bar .more { margin-left: auto; }
.search { display: flex; align-items: center; height: 19px; padding: 0 6px 0 2px; border-bottom: 1px solid #c2c5ca; }
.search input { flex: 1; outline: 0; }
.search input::placeholder { color: #777; opacity: 1; }
.items li { display: flex; align-items: center; height: 21px; padding-left: 10px; gap: 7px; }
.items .leaf { padding-left: 40px; }
.leaf span { padding: 2px 9px 3px 4px; background: #c9daf0; }

table { width: 347px; border-collapse: collapse; table-layout: fixed; }
.c-no { width: 21px; }
.c-name { width: 101px; }
.c-add { width: 41px; }
th, td { height: 21px; padding: 0 0 0 3px; border: 1px solid #d4d4d4; border-width: 0 1px 1px 0; line-height: 16px; white-space: nowrap; font-weight: 400; text-align: left; overflow: hidden; }
th { background: #f0f0f0; color: #333; text-align: center; padding: 0; }
thead th { height: 20px; }
thead th:first-child { background: #eaf1fa; }
td.key { color: #1558f0; }
td.shade { background: #eaeaea; }
td.parent { padding-left: 2px; }
td:last-child { padding: 0; text-align: center; }
td input { appearance: none; display: block; width: 14px; height: 14px; margin: 0 auto 3px; border: 1px solid #888; border-radius: 3px; background: #fff; }
.expand { width: 13px; height: 13px; margin-right: 5px; border: 1px solid #666; border-radius: 2px; vertical-align: -1px; background: linear-gradient(#444, #444) center / 5px 1px no-repeat, linear-gradient(#444, #444) center / 1px 5px no-repeat; }

.splitter { width: 4px; flex: none; display: flex; align-items: flex-start; padding-top: 372px; background: #fff; }
.splitter button { width: 4px; height: 100px; background: #5c6773; display: flex; align-items: center; justify-content: flex-end; }

/* drawing */
.canvas { flex: 1; min-width: 0; height: 100%; background: #000; }
.walls { fill: #8c8c8c; }
.axes { fill: none; stroke: #008000; }
.dim { stroke: #006400; }
.grid-dark { stroke: #640404; }
.mid { stroke: #8c0000; }
.grid-red { stroke: #f40000; }
.marks { fill: #fff; font: 18px "Noto Sans CJK SC", sans-serif; text-anchor: middle; }
```
